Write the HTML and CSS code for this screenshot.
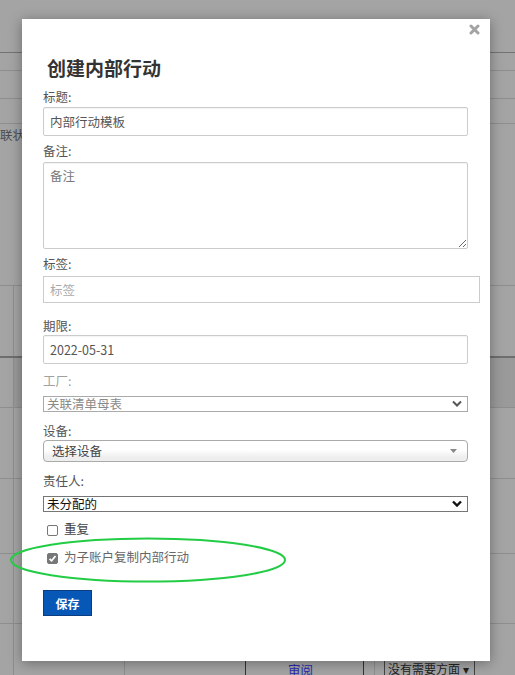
FILE: index.html
```
<!DOCTYPE html>
<html lang="zh-CN">
<head>
    <meta charset="UTF-8">
    <meta name="viewport" content="width=device-width, initial-scale=1.0">
    <title>创建内部行动</title>
    <link rel="stylesheet" href="styles.css">
</head>
<body>

    <!-- page behind the dialog -->
    <div class="page">
        <div class="row r1"></div>
        <div class="row r2"></div>
        <div class="row r3"></div>
        <div class="row r4"></div>
        <div class="row r5"><span class="bg-text">联状</span></div>
        <div class="row r6"><div class="cell-first"></div></div>
        <div class="row r7"><div class="cell-first"></div><div class="cell-rest"></div></div>
        <div class="row r8"><div class="cell-first"></div></div>
        <div class="row r9"><div class="cell-first"></div></div>
        <div class="row r10"><div class="cell-first"></div></div>
        <div class="row r11">
            <div class="cell-first"></div>
            <div class="cell c2"></div>
            <div class="cell c3"></div>
            <div class="cell c4">审阅</div>
            <div class="cell c5"></div>
            <div class="cell c6"><span class="bg-select">没有需要方面 ▾</span></div>
        </div>
    </div>

    <div class="modal">
        <span class="close">
            <svg width="11" height="11" viewBox="0 0 11 11">
                <path d="M2 2 L9 9 M9 2 L2 9" stroke="#a3a3a3" stroke-width="3" stroke-linecap="round"/>
            </svg>
        </span>

        <h2 class="modal-title">创建内部行动</h2>

        <div class="field">
            <label class="field-label">标题:</label>
            <input type="text" class="text-input" value="内部行动模板">
        </div>

        <div class="field">
            <label class="field-label gap-2">备注:</label>
            <textarea class="text-area" placeholder="备注"></textarea>
        </div>

        <div class="field field-wide">
            <label class="field-label gap-3">标签:</label>
            <input type="text" class="text-input tag-input" placeholder="标签">
        </div>

        <div class="field field-date">
            <label class="field-label gap-0">期限:</label>
            <input type="text" class="text-input" value="2022-05-31">
        </div>

        <div class="field field-loose">
            <label class="field-label label-disabled gap-6">工厂:</label>
            <div class="select select-disabled">
                <span>关联清单母表</span>
                <svg width="10" height="7" viewBox="0 0 10 7"><path d="M1 1.5 L5 5.5 L9 1.5" fill="none" stroke="#555" stroke-width="2"/></svg>
            </div>
        </div>

        <div class="field field-loose">
            <label class="field-label gap-0">设备:</label>
            <div class="chosen">
                <span>选择设备</span>
                <svg width="7" height="4" viewBox="0 0 7 4"><path d="M0 0 H7 L3.5 4 Z" fill="#888"/></svg>
            </div>
        </div>

        <div class="field field-owner">
            <label class="field-label gap-6">责任人:</label>
            <div class="select">
                <span>未分配的</span>
                <svg width="10" height="7" viewBox="0 0 10 7"><path d="M1 1.5 L5 5.5 L9 1.5" fill="none" stroke="#111" stroke-width="2.4"/></svg>
            </div>
        </div>

        <div class="check-row">
            <span class="check-box"></span>
            <span class="check-text">重复</span>
        </div>

        <div class="check-row check-last">
            <span class="check-box checked">
                <svg width="9" height="9" viewBox="0 0 9 9"><path d="M1.5 4.8 L3.6 6.8 L7.5 2" fill="none" stroke="#fff" stroke-width="1.8"/></svg>
            </span>
            <span class="check-text muted">为子账户复制内部行动</span>
        </div>

        <button class="btn-save">保存</button>
    </div>

    <!-- annotation drawn over the screenshot -->
    <svg class="mark" width="280" height="48" viewBox="0 0 280 48">
        <ellipse cx="139" cy="23" rx="137" ry="21.5" fill="none" stroke="#22cc44" stroke-width="2"/>
    </svg>

</body>
</html>
```

FILE: styles.css
```
body {
    margin: 0;
    width: 515px;
    height: 675px;
    overflow: hidden;
    background-color: #a4a4a4;
    font-family: "Noto Sans CJK SC", "Noto Sans", sans-serif;
    position: relative;
}

/* background page */
.page {
    width: 515px;
}
.row {
    box-sizing: border-box;
    border-bottom: 1px solid #8e8e8e;
    display: flex;
}
.r1 { height: 53px; border-bottom-color: #737373; }
.r2 { height: 18px; }
.r3 { height: 28px; }
.r4 { height: 25px; }
.r5 { height: 162px; }
.r6 { height: 72px; border-bottom: 2px solid #6e6e6e; }
.r7 { height: 50px; }
.r8 { height: 71px; }
.r9 { height: 75px; }
.r10 { height: 70px; }
.r11 { height: 52px; border-bottom: none; }
.cell-first {
    width: 14px;
    box-sizing: border-box;
    border-right: 1px solid #8e8e8e;
}
.cell-rest {
    flex: 1;
    background-color: #9a9a9a;
}
.bg-text {
    font-size: 12.5px;
    line-height: 18px;
    color: #4e4e4e;
    padding-top: 2px;
}
.cell {
    box-sizing: border-box;
}
.c2 { width: 111px; border-right: 1px solid #8e8e8e; }
.c3 { width: 121px; border-right: 1px solid #2020c8; }
.c4 {
    width: 118px;
    border-right: 1px solid #2020c8;
    color: #2a2ab0;
    font-size: 12.5px;
    text-align: center;
    padding: 36px 8px 0 0;
}
.c5 { width: 11px; border-right: 1px solid #8e8e8e; }
.c6 { padding: 35px 0 0 9px; }
.bg-select {
    display: block;
    width: 91px;
    box-sizing: border-box;
    border: 1px solid #444;
    font-size: 12px;
    color: #222;
    padding-left: 3px;
    line-height: 18px;
}

/* dialog */
.modal {
    position: absolute;
    left: 22px;
    top: 19px;
    width: 468px;
    height: 642px;
    box-sizing: border-box;
    padding: 37px 22px 0 21px;
    background: white;
    box-shadow: 0 2px 12px rgba(0, 0, 0, 0.35);
}
.close {
    position: absolute;
    top: 5px;
    right: 10px;
    line-height: 0;
}
.modal-title {
    margin: 0 0 9px 4px;
    font-size: 19px;
    line-height: 23px;
    font-weight: bold;
    color: #333;
}
.field {
    margin-bottom: 6px;
}
.field-wide { margin-bottom: 14px; }
.field-date { margin-bottom: 8px; }
.field-loose { margin-bottom: 10px; }
.field-owner { margin-bottom: 9px; }
.field-label {
    display: block;
    font-size: 12.5px;
    line-height: 17px;
    color: #555;
    margin-bottom: 2px;
}
.gap-0 { margin-bottom: 1px; }
.gap-2 { margin-bottom: 3px; }
.gap-3 { margin-bottom: 4px; }
.gap-6 { margin-bottom: 7px; }
.label-disabled {
    color: #a0a0a0;
}
.text-input, .text-area {
    display: block;
    width: 100%;
    box-sizing: border-box;
    height: 29px;
    margin: 0;
    padding: 0 6px 1px;
    border: 1px solid #ccc;
    border-radius: 2px;
    box-shadow: inset 0 1px 1px rgba(0, 0, 0, 0.05);
    font-family: "Noto Sans CJK SC", "Noto Sans", sans-serif;
    font-size: 12.5px;
    color: #555;
    outline: none;
}
.text-area {
    height: 87px;
    padding: 4px 6px;
    line-height: 18px;
    resize: vertical;
}
.text-area::placeholder {
    color: #777;
}
.tag-input {
    width: 437px;
    height: 27px;
    border-radius: 0;
    box-shadow: none;
}
.tag-input::placeholder {
    color: #aaa;
}
.select {
    display: flex;
    align-items: center;
    justify-content: space-between;
    box-sizing: border-box;
    height: 16px;
    border: 1px solid #767676;
    padding: 0 5px 1px 3px;
    font-size: 12.5px;
    color: #111;
    line-height: 14px;
}
.select-disabled {
    border-color: #aaa;
    color: #8a8a8a;
}
.chosen {
    display: flex;
    align-items: center;
    justify-content: space-between;
    box-sizing: border-box;
    height: 22px;
    border: 1px solid #aaa;
    border-radius: 4px;
    padding: 0 10px 1px 8px;
    background: linear-gradient(#ffffff 45%, #eeeeee 80%);
    font-size: 12.5px;
    color: #444;
}
.check-row {
    display: flex;
    align-items: center;
    height: 18px;
    margin-bottom: 10px;
    padding-left: 4px;
}
.check-last {
    margin-bottom: 23px;
}
.check-box {
    width: 11px;
    height: 11px;
    box-sizing: border-box;
    border: 1px solid #777;
    border-radius: 2px;
    background: white;
    display: flex;
    align-items: center;
    justify-content: center;
}
.check-box.checked {
    background: #777;
}
.check-text {
    margin-left: 6px;
    font-size: 12.5px;
    line-height: 16px;
    padding-bottom: 2px;
    color: #444;
}
.check-text.muted {
    color: #666;
}
.btn-save {
    display: block;
    width: 49px;
    height: 26px;
    margin: 0;
    padding: 0;
    background-color: #0757b7;
    border: 1px solid #0b3e80;
    color: white;
    font-family: "Noto Sans CJK SC", "Noto Sans", sans-serif;
    font-size: 12px;
    font-weight: bold;
}

.mark {
    position: absolute;
    left: 9px;
    top: 537px;
}
```
